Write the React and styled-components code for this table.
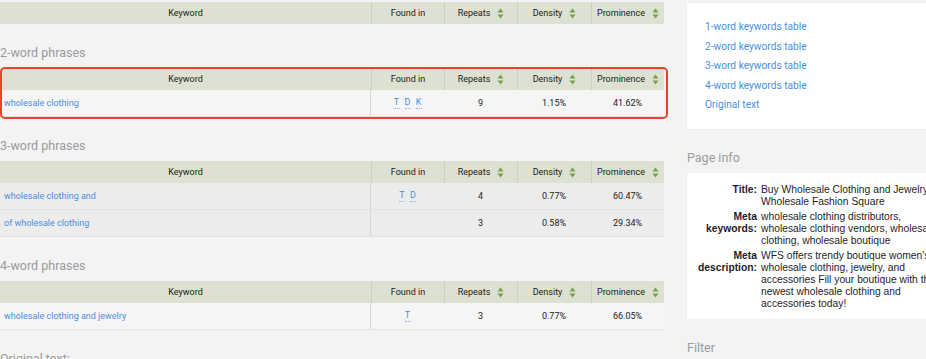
import React from "react";
import styled, { createGlobalStyle } from "styled-components";

const GlobalStyle = createGlobalStyle`
  html, body {
    margin: 0;
    padding: 0;
    overflow: hidden;
    background: #f3f3f3;
    font-family: Roboto, "Liberation Sans", Arial, sans-serif;
  }
`;

const Page = styled.div`
  display: flex;
  gap: 23px;
  width: 960px;
  padding-top: 2px;
`;

const LeftColumn = styled.div`
  width: 664px;
  flex-shrink: 0;
  display: flex;
  flex-direction: column;
`;

const RightColumn = styled.div`
  width: 268px;
  flex-shrink: 0;
  display: flex;
  flex-direction: column;
  padding-top: 1px;
`;

const SectionTitle = styled.div`
  padding: 21px 0 7px;
  line-height: 16px;
  font-size: 12.5px;
  color: #9b9b9b;
`;

const TableWrap = styled.div`
  position: relative;

  ${(p) =>
    p.$highlight &&
    `
    &::after {
      content: "";
      position: absolute;
      inset: -1px -4px -2px 0;
      border: 2px solid #e5432d;
      border-radius: 5px;
      pointer-events: none;
    }
  `}
`;

const Row = styled.div`
  display: grid;
  grid-template-columns: 371px 73px 73px 74px 73px;
  height: ${(p) => (p.$head ? "22px" : "26px")};
  background: ${(p) => (p.$head ? "#dce1d1" : p.$shaded ? "#ececec" : "#f5f5f5")};
  border-bottom: ${(p) => (p.$head ? "none" : "1px solid #e2e2e2")};
  font-size: 9px;
  color: #222;
`;

const HeadCell = styled.div`
  display: flex;
  align-items: center;
  justify-content: center;
  gap: 7px;
  border-left: ${(p) => (p.$first ? "none" : "1px solid #c9d0bb")};
`;

const Cell = styled.div`
  display: flex;
  align-items: center;
  justify-content: ${(p) => (p.$left ? "flex-start" : "center")};
  padding-left: ${(p) => (p.$left ? "4px" : "0")};
  border-right: ${(p) => (p.$left ? "1px solid #d6d9cf" : "none")};
`;

const KeywordLink = styled.a`
  color: #4a8fe0;
  text-decoration: none;
`;

const Sources = styled.div`
  display: flex;
  gap: 5px;
`;

const Source = styled.span`
  color: #4a8fe0;
  width: 6px;
  text-align: center;
  border-bottom: 1px dotted #8fb6e8;
  line-height: 11px;
`;

const SortIcon = () => (
  <svg width="7" height="11" viewBox="0 0 7 11">
    <path d="M3.5 0.5 L6.5 4.5 L0.5 4.5 Z" fill="#76a04f" />
    <path d="M3.5 10.5 L6.5 6.5 L0.5 6.5 Z" fill="#76a04f" />
  </svg>
);

const Header = () => (
  <Row $head>
    <HeadCell $first>Keyword</HeadCell>
    <HeadCell>Found in</HeadCell>
    <HeadCell>
      Repeats <SortIcon />
    </HeadCell>
    <HeadCell>
      Density <SortIcon />
    </HeadCell>
    <HeadCell>
      Prominence <SortIcon />
    </HeadCell>
  </Row>
);

const DataRow = ({ row, shaded }) => (
  <Row $shaded={shaded}>
    <Cell $left>
      <KeywordLink href="#">{row.keyword}</KeywordLink>
    </Cell>
    <Cell>
      <Sources>
        {row.found.map((f) => (
          <Source key={f}>{f}</Source>
        ))}
      </Sources>
    </Cell>
    <Cell>{row.repeats}</Cell>
    <Cell>{row.density}</Cell>
    <Cell>{row.prominence}</Cell>
  </Row>
);

const sections = [
  {
    title: "2-word phrases",
    highlight: true,
    rows: [
      { keyword: "wholesale clothing", found: ["T", "D", "K"], repeats: 9, density: "1.15%", prominence: "41.62%" },
    ],
  },
  {
    title: "3-word phrases",
    shaded: true,
    rows: [
      { keyword: "wholesale clothing and", found: ["T", "D"], repeats: 4, density: "0.77%", prominence: "60.47%" },
      { keyword: "of wholesale clothing", found: [], repeats: 3, density: "0.58%", prominence: "29.34%" },
    ],
  },
  {
    title: "4-word phrases",
    rows: [
      { keyword: "wholesale clothing and jewelry", found: ["T"], repeats: 3, density: "0.77%", prominence: "66.05%" },
    ],
  },
];

const Card = styled.div`
  background: #fff;
  box-shadow: 0 0 1px rgba(0, 0, 0, 0.08);
`;

const NavCard = styled(Card)`
  display: flex;
  flex-direction: column;
  padding: 14px 18px 14px;
`;

const NavLink = styled.a`
  color: #4a8fe0;
  text-decoration: none;
  font-size: 10.2px;
  line-height: 19.5px;
`;

const InfoCard = styled(Card)`
  display: grid;
  grid-template-columns: 64px 184px;
  column-gap: 4px;
  row-gap: 3px;
  padding: 11px 6px 9px;
  font-family: "Liberation Sans", Arial, sans-serif;
  font-size: 10.3px;
  line-height: 12px;
  color: #1e1e1e;
`;

const InfoLabel = styled.div`
  text-align: right;
  font-weight: bold;
`;

const InfoValue = styled.div``;

const pageInfo = [
  ["Title:", "Buy Wholesale Clothing and Jewelry | Wholesale Fashion Square"],
  ["Meta keywords:", "wholesale clothing distributors, wholesale clothing vendors, wholesale clothing, wholesale boutique"],
  [
    "Meta description:",
    "WFS offers trendy boutique women's wholesale clothing, jewelry, and accessories Fill your boutique with the newest wholesale clothing and accessories today!",
  ],
];

export default function App() {
  return (
    <>
      <GlobalStyle />
      <Page>
        <LeftColumn>
          <TableWrap>
            <Header />
          </TableWrap>
          {sections.map((s) => (
            <React.Fragment key={s.title}>
              <SectionTitle>{s.title}</SectionTitle>
              <TableWrap $highlight={s.highlight}>
                <Header />
                {s.rows.map((r) => (
                  <DataRow key={r.keyword} row={r} shaded={s.shaded} />
                ))}
              </TableWrap>
            </React.Fragment>
          ))}
          <SectionTitle>Original text:</SectionTitle>
        </LeftColumn>
        <RightColumn>
          <NavCard>
            <NavLink href="#">1-word keywords table</NavLink>
            <NavLink href="#">2-word keywords table</NavLink>
            <NavLink href="#">3-word keywords table</NavLink>
            <NavLink href="#">4-word keywords table</NavLink>
            <NavLink href="#">Original text</NavLink>
          </NavCard>
          <SectionTitle>Page info</SectionTitle>
          <InfoCard>
            {pageInfo.map(([label, value]) => (
              <React.Fragment key={label}>
                <InfoLabel>{label}</InfoLabel>
                <InfoValue>{value}</InfoValue>
              </React.Fragment>
            ))}
          </InfoCard>
          <SectionTitle>Filter</SectionTitle>
        </RightColumn>
      </Page>
    </>
  );
}
